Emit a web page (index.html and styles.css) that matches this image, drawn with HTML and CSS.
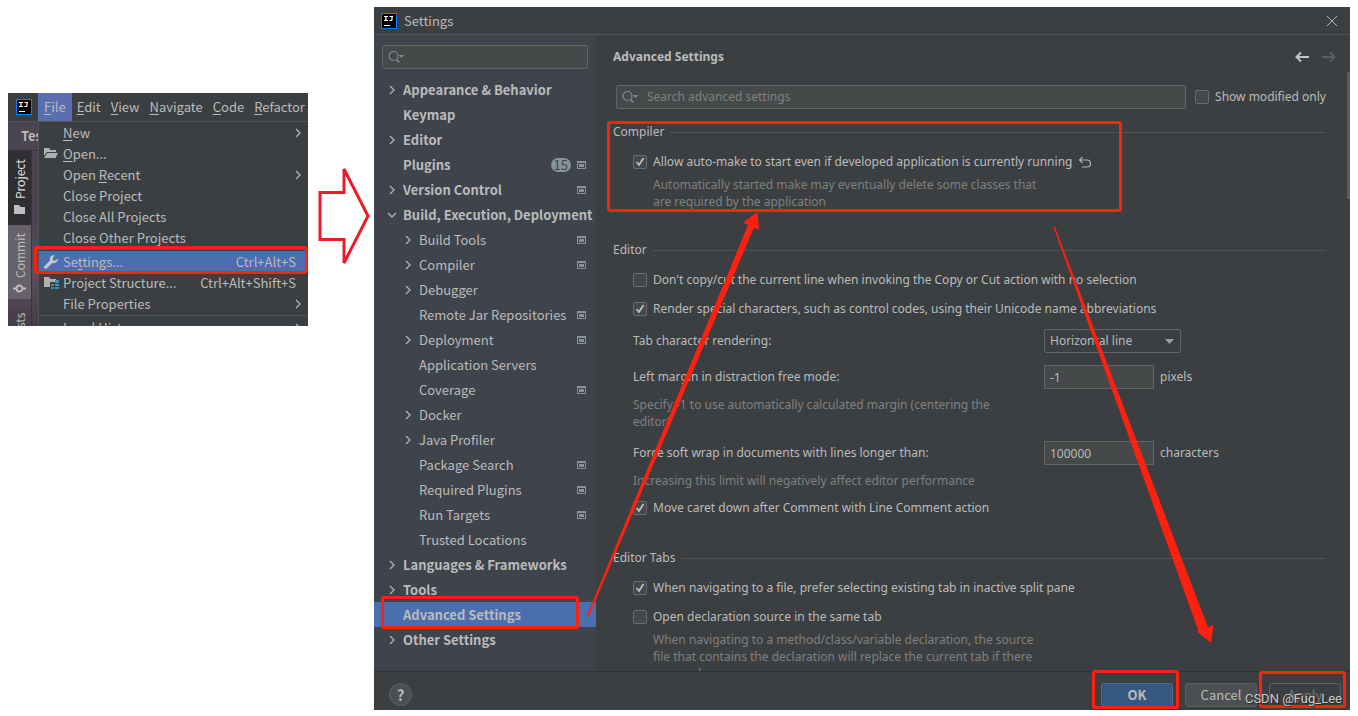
FILE: index.html
```html
<!DOCTYPE html>
<html lang="en">
<head>
<meta charset="utf-8">
<title>Settings</title>
<link rel="stylesheet" href="styles.css">
</head>
<body>
<svg class="defs" width="0" height="0" aria-hidden="true">
  <symbol id="logo" viewBox="0 0 16 16"><rect x=".5" y=".5" width="15" height="15" fill="#000" stroke="#087cfa"/><path d="M3 3.500h4M5 3.500v4M3 7.500h4M8.500 3.500h3.500M11 3.500v3q0 1-1 1H8.500" fill="none" stroke="#fff" stroke-width="1.200"/><path d="M3 12.500h6" stroke="#fff"/></symbol>
  <symbol id="chev" viewBox="0 0 8 10"><path d="M2 1l4 4-4 4" fill="none" stroke="#adb0b3" stroke-width="1.400"/></symbol>
  <symbol id="down" viewBox="0 0 10 8"><path d="M1 2l4 4 4-4" fill="none" stroke="#adb0b3" stroke-width="1.400"/></symbol>
  <symbol id="proj" viewBox="0 0 9 8"><path fill="#87939a" fill-rule="evenodd" d="M0 0h9v8H0zM1 2h7v5H1z"/><path fill="#87939a" d="M2 3h5v3H2z"/></symbol>
  <symbol id="search" viewBox="0 0 16 14"><circle cx="5.500" cy="6" r="4.500" fill="none" stroke="#7f8b91" stroke-width="1.200"/><path d="M8.500 9.500l3 3" stroke="#7f8b91" stroke-width="1.500"/><path d="M11 5h5l-2.500 3z" fill="#7f8b91"/></symbol>
</svg>

<section class="ide" aria-label="File menu">
  <nav class="menubar">
    <svg class="logo"><use href="#logo"/></svg>
    <button class="open"><u>F</u>ile</button><button><u>E</u>dit</button><button><u>V</u>iew</button><button><u>N</u>avigate</button><button><u>C</u>ode</button><button><u>R</u>efactor</button>
  </nav>
  <div class="ide-body">
    <aside class="strip">
      <div class="crumb">Test</div>
      <div class="tabs">
        <button class="tab active">Project<svg width="11" height="9" viewBox="0 0 11 9"><path fill="#bdbfc1" d="M0 0h5l1.500 2H11v7H0z"/></svg></button>
        <button class="tab">Commit<svg width="13" height="9" viewBox="0 0 13 9"><circle cx="6.500" cy="4.500" r="3" fill="none" stroke="#bdbfc1" stroke-width="1.800"/><path d="M0 4.500h3.500M9.500 4.500H13" stroke="#bdbfc1" stroke-width="1.800"/></svg></button>
        <button class="tab last">Tests</button>
      </div>
    </aside>
    <div class="menu">
      <button class="item"><span class="ic"></span><span><u>N</u>ew</span><svg class="chev"><use href="#chev"/></svg></button>
      <button class="item"><span class="ic"><svg width="14" height="11" viewBox="0 0 14 11"><path fill="#afb1b3" d="M0 0h5l1.500 2H12v2H3L0 8zM3.500 5H14l-2.500 5H0z"/></svg></span><span><u>O</u>pen...</span></button>
      <button class="item"><span class="ic"></span><span>Open <u>R</u>ecent</span><svg class="chev"><use href="#chev"/></svg></button>
      <button class="item"><span class="ic"></span><span>Close Pro<u>j</u>ect</span></button>
      <button class="item"><span class="ic"></span><span>Close All Projects</span></button>
      <button class="item"><span class="ic"></span><span>Close Other Projects</span></button>
      <hr>
      <button class="item selected"><span class="ic"><svg width="14" height="14" viewBox="0 0 14 14"><path fill="#c3c7cc" d="M13.600 3.600l-2.300 2.200-2.200-.6-.5-2L10.700.6C9 0 7.200.6 6.300 2c-.7 1.100-.7 2.300-.3 3.400L.5 10.900c-.7.7-.7 1.700 0 2.400s1.700.7 2.400 0L8.400 7.900c1.100.4 2.400.3 3.500-.4 1.400-.9 2.200-2.500 1.700-3.900z"/></svg></span><span>Se<u>t</u>tings...</span><kbd>Ctrl+Alt+S</kbd><i class="mark"></i></button>
      <button class="item"><span class="ic"><svg width="15" height="12" viewBox="0 0 15 12"><path fill="#afb1b3" d="M0 0h5l1.500 2H12v3H6v5H0z"/><path fill="#3592c4" d="M11 3h4v3h-4zM7 7h3v2H7zM11 7h4v2h-4zM7 10h3v2H7zM11 10h4v2h-4z"/></svg></span><span>Project Structure...</span><kbd>Ctrl+Alt+Shift+S</kbd></button>
      <button class="item"><span class="ic"></span><span>File Properties</span><svg class="chev"><use href="#chev"/></svg></button>
      <hr>
      <button class="item"><span class="ic"></span><span>Local <u>H</u>istory</span><svg class="chev"><use href="#chev"/></svg></button>
    </div>
  </div>
</section>

<svg class="next" width="52" height="100" viewBox="0 0 52 100" aria-hidden="true"><path d="M2 26.500h24V3l24 47-24 47V73.500H2z" fill="none" stroke="#ed1c24" stroke-width="3"/></svg>

<main class="dialog">
  <header class="title"><svg class="logo"><use href="#logo"/></svg><span>Settings</span><button class="close" aria-label="Close"><svg width="12" height="12" viewBox="0 0 12 12"><path d="M1 1l10 10M11 1L1 11" stroke="#afb1b3"/></svg></button></header>
  <div class="content">
    <aside class="side">
      <label class="field"><svg class="mag"><use href="#search"/></svg><input type="text" aria-label="Search settings"></label>
      <ul class="tree">
        <li><svg class="chev"><use href="#chev"/></svg><b>Appearance &amp; Behavior</b></li>
        <li><i class="chev"></i><b>Keymap</b></li>
        <li><svg class="chev"><use href="#chev"/></svg><b>Editor</b></li>
        <li><i class="chev"></i><b>Plugins</b><span class="badge">15</span><svg class="proj"><use href="#proj"/></svg></li>
        <li><svg class="chev"><use href="#chev"/></svg><b>Version Control</b><svg class="proj"><use href="#proj"/></svg></li>
        <li><svg class="chev"><use href="#down"/></svg><b>Build, Execution, Deployment</b></li>
        <li class="sub"><svg class="chev"><use href="#chev"/></svg><span>Build Tools</span><svg class="proj"><use href="#proj"/></svg></li>
        <li class="sub"><svg class="chev"><use href="#chev"/></svg><span>Compiler</span><svg class="proj"><use href="#proj"/></svg></li>
        <li class="sub"><svg class="chev"><use href="#chev"/></svg><span>Debugger</span></li>
        <li class="sub"><i class="chev"></i><span>Remote Jar Repositories</span><svg class="proj"><use href="#proj"/></svg></li>
        <li class="sub"><svg class="chev"><use href="#chev"/></svg><span>Deployment</span><svg class="proj"><use href="#proj"/></svg></li>
        <li class="sub"><i class="chev"></i><span>Application Servers</span></li>
        <li class="sub"><i class="chev"></i><span>Coverage</span><svg class="proj"><use href="#proj"/></svg></li>
        <li class="sub"><svg class="chev"><use href="#chev"/></svg><span>Docker</span></li>
        <li class="sub"><svg class="chev"><use href="#chev"/></svg><span>Java Profiler</span></li>
        <li class="sub"><i class="chev"></i><span>Package Search</span><svg class="proj"><use href="#proj"/></svg></li>
        <li class="sub"><i class="chev"></i><span>Required Plugins</span><svg class="proj"><use href="#proj"/></svg></li>
        <li class="sub"><i class="chev"></i><span>Run Targets</span><svg class="proj"><use href="#proj"/></svg></li>
        <li class="sub"><i class="chev"></i><span>Trusted Locations</span></li>
        <li><svg class="chev"><use href="#chev"/></svg><b>Languages &amp; Frameworks</b></li>
        <li><svg class="chev"><use href="#chev"/></svg><b>Tools</b></li>
        <li class="selected"><i class="chev"></i><b>Advanced Settings</b><i class="mark"></i></li>
        <li><svg class="chev"><use href="#chev"/></svg><b>Other Settings</b></li>
      </ul>
    </aside>
    <div class="panel">
      <div class="head"><h1>Advanced Settings</h1>
        <button aria-label="Back"><svg width="14" height="12" viewBox="0 0 14 12"><path d="M1.500 6H14M6 1.500L1.500 6 6 10.500" fill="none" stroke="#c4c6c8" stroke-width="2"/></svg></button>
        <button aria-label="Forward" disabled><svg width="14" height="12" viewBox="0 0 14 12"><path d="M0 6h12.500M8 1.500L12.500 6 8 10.500" fill="none" stroke="#5c5f61" stroke-width="2"/></svg></button>
      </div>
      <div class="filter"><label class="field"><svg class="mag"><use href="#search"/></svg><input type="text" placeholder="Search advanced settings" aria-label="Search advanced settings"></label><label class="check"><input type="checkbox">Show modified only</label></div>

      <section class="group">
        <h2>Compiler</h2>
        <div class="line"><label class="check"><input type="checkbox" checked>Allow auto-make to start even if developed application is currently running</label><button class="undo" aria-label="Reset"><svg width="14" height="12" viewBox="0 0 14 12"><path d="M4.500 1L1.500 4l3 3M1.500 4H9q3.500 0 3.500 3.500T9 11H4" fill="none" stroke="#afb1b3" stroke-width="1.200"/></svg></button></div>
        <p class="note indent">Automatically started make may eventually delete some classes that<br>are required by the application</p>
        <i class="mark"></i>
      </section>

      <section class="group">
        <h2>Editor</h2>
        <label class="check"><input type="checkbox">Don't copy/cut the current line when invoking the Copy or Cut action with no selection</label>
        <label class="check"><input type="checkbox" checked>Render special characters, such as control codes, using their Unicode name abbreviations</label>
        <div class="row"><label for="tab">Tab character rendering:</label><select id="tab"><option>Horizontal line</option></select></div>
        <div class="row"><label for="margin">Left margin in distraction free mode:</label><input id="margin" type="text" value="-1"><span>pixels</span></div>
        <p class="note">Specify -1 to use automatically calculated margin (centering the<br>editor)</p>
        <div class="row"><label for="wrap">Force soft wrap in documents with lines longer than:</label><input id="wrap" type="text" value="100000"><span>characters</span></div>
        <p class="note">Increasing this limit will negatively affect editor performance</p>
        <label class="check"><input type="checkbox" checked>Move caret down after Comment with Line Comment action</label>
      </section>

      <section class="group">
        <h2>Editor Tabs</h2>
        <label class="check"><input type="checkbox" checked>When navigating to a file, prefer selecting existing tab in inactive split pane</label>
        <label class="check"><input type="checkbox">Open declaration source in the same tab</label>
        <p class="note indent">When navigating to a method/class/variable declaration, the source<br>file that contains the declaration will replace the current tab if there<br>are no changes</p>
      </section>
      <i class="thumb"></i>
    </div>
  </div>
  <footer class="foot">
    <button class="help" aria-label="Help">?</button>
    <button class="btn ok">OK<i class="mark"></i></button>
    <button class="btn">Cancel</button>
    <button class="btn off">Apply<i class="mark"></i></button>
    <span class="credit">CSDN @Fug_Lee</span>
  </footer>
  <svg class="arrows" viewBox="0 0 976 703" aria-hidden="true"><path fill="#ff2010" d="M213 608.500L374 218l-5-2.500L383.500 205l1.500 18-5-2.500L215 609zM679.500 220L824.500 624 823 624l-.5 0L837 636l2.500-18-5.500 2.500L681 220z"/></svg>
</main>
</body>
</html>
```
FILE: styles.css
```css
* { box-sizing: border-box; }
body {
  margin: 0;
  height: 100vh;
  padding: 7px 8px 6px;
  display: flex;
  align-items: flex-start;
  background: #fff;
  color: #bbbbbb;
  font: 13px/20px "Noto Sans CJK SC", "Noto Sans", sans-serif;
  overflow: hidden;
}
button, input, select { font: inherit; color: inherit; margin: 0; padding: 0; border: 0; background: none; }
button { white-space: nowrap; }
svg { display: block; flex: none; }
u { text-underline-offset: 2px; text-decoration-thickness: 1px; }
.defs { position: absolute; }
.logo { width: 16px; height: 16px; }
.chev { width: 10px; height: 10px; flex: none; }
.mark { position: absolute; border: 3px solid #ff2010; border-radius: 3px; pointer-events: none; }

/* IDE window with the File menu open */
.ide { width: 300px; flex: none; height: 233px; margin-top: 86px; background: #3c3f41; overflow: hidden; }
.menubar { display: flex; height: 28px; align-items: stretch; }
.menubar .logo { margin: 6px 6px 0 8px; }
.menubar button { padding: 0 5px; }
.menubar .open { padding: 0 6px; background: #5a6eb0; }
.ide-body { display: flex; border-top: 1px solid #515456; }
.strip { width: 30px; height: 204px; flex: none; overflow: hidden; background: linear-gradient(#4a4550, #4a4351 100px, #5e4f5e 150px, #443c47); }
.crumb { height: 29px; padding: 4px 0 0 13px; font-weight: bold; border-bottom: 1px solid #39353c; }
.tabs { width: 24px; border-right: 1px solid #38343c; font-size: 12px; }
.tab { writing-mode: vertical-rl; transform: rotate(180deg); display: flex; flex-direction: row-reverse; align-items: center; gap: 6px; width: 23px; height: 74px; padding-bottom: 8px; line-height: 20px; background: #66616a; }
.tab.active { background: #302e33; color: #e0e0e0; }
.tab.active svg { transform: rotate(180deg); }
.tab.last { padding-bottom: 14px; background: none; }
.menu { flex: 1; border-left: 1px solid #515456; }
.item { position: relative; display: flex; align-items: center; width: 100%; height: 21px; text-align: left; padding-right: 12px; }
.item .ic { width: 24px; padding-left: 5px; flex: none; }
.item .chev, .item kbd { margin-left: auto; font: inherit; }
.item .chev { margin-right: -7px; }
.item.selected { background: #4b6eaf; }
.item .mark { inset: -5px 0 -2px -5px; z-index: 1; }
.menu hr { border: 0; border-top: 1px solid #515456; margin: 1px 0; }
.next { margin: 159px 4px 0 10px; }

/* Settings dialog */
.dialog { position: relative; flex: 1; min-width: 0; height: 100%; display: flex; flex-direction: column; background: #3c3f41; }
.title { display: flex; align-items: center; height: 28px; padding: 0 12px 0 7px; gap: 7px; border-bottom: 1px solid #515456; }
.close { margin-left: auto; }
.content { flex: 1; min-height: 0; display: flex; }
.side { width: 222px; flex: none; padding-top: 10px; background: #3f434c; overflow: hidden; }
.field { display: flex; align-items: center; height: 24px; padding-left: 5px; border: 1px solid #646464; border-radius: 2px; background: #45494a; }
.field input { flex: 1; min-width: 0; outline: 0; margin-left: 9px; }
.field input::placeholder { color: #808080; opacity: 1; }
.mag { width: 16px; height: 14px; }
.side .field { margin: 0 8px 8px; }
.tree { list-style: none; margin: 0; padding: 0; }
.tree li { position: relative; display: flex; align-items: center; height: 25px; padding: 0 10px 0 13px; gap: 6px; white-space: nowrap; }
.tree li.sub { padding-left: 29px; }
.tree li.selected { background: #4b6eaf; }
.tree .mark { inset: -6px 17px -2px 7px; z-index: 1; }
.proj { width: 9px; height: 8px; margin-left: auto; }
.badge { margin-left: auto; height: 14px; line-height: 14px; padding: 0 3px; border-radius: 7px; background: #87939a; color: #3f434c; }
.badge + .proj { margin-left: 0; }

.panel { position: relative; flex: 1; min-width: 0; padding: 10px 24px 0 17px; overflow: hidden; font-family: "Noto Sans", sans-serif; font-size: 12px; }
.head { display: flex; align-items: center; height: 24px; gap: 13px; margin: 0 -10px 16px 0; }
h1 { flex: 1; margin: 0; font-size: 12px; }
.filter { display: flex; align-items: center; gap: 9px; padding-left: 3px; margin-bottom: 13px; }
.filter .field { flex: 1; }
.check { display: flex; align-items: center; height: 20px; gap: 6px; white-space: nowrap; }
.check input { appearance: none; width: 14px; height: 14px; flex: none; border: 1px solid #6b6b6b; border-radius: 2px; background: #43494a; }
.check input:checked { background: #43494a url("data:image/svg+xml,%3Csvg xmlns='http://www.w3.org/2000/svg' viewBox='0 0 12 12'%3E%3Cpath d='M2.500 6l2.500 3 4.500-7' fill='none' stroke='%23bbb' stroke-width='1.900'/%3E%3C/svg%3E"); }
.group { position: relative; margin-bottom: 30px; }
h2 { display: flex; align-items: center; gap: 6px; margin: 0 0 10px; font-size: 12px; font-weight: normal; }
h2::after { content: ""; flex: 1; border-top: 1px solid #515456; }
.group > :not(h2) { margin-left: 20px; }
.check + .check { margin-top: 9px; }
.note + .check { margin-top: 9px; }
.line { display: flex; align-items: center; gap: 6px; }
.row { display: flex; align-items: center; height: 24px; margin-top: 11px; gap: 6px; }
.row + .row { margin-top: 12px; }
.check + .row { margin-top: 10px; }
.row label { width: 405px; }
.row input, .row select { width: 110px; height: 24px; padding: 0 5px; border: 1px solid #646464; background: #45494a; }
.row select { width: 137px; border-radius: 2px; appearance: none; background: #3c3f41 url("data:image/svg+xml,%3Csvg xmlns='http://www.w3.org/2000/svg' viewBox='0 0 9 5'%3E%3Cpath d='M0 0h9L4.500 5z' fill='%239da0a2'/%3E%3C/svg%3E") no-repeat right 6px center / 9px 5px; }
.note { margin: 7px 0 0; line-height: 17px; color: #808080; white-space: nowrap; }
.group > .note.indent { margin: 4px 0 0 40px; }
.group > .mark { inset: -1px auto -2px -6px; margin-left: 0; width: 515px; }
.thumb { position: absolute; top: 37px; right: 0; width: 3px; height: 127px; background: #5b5e60; }

.foot { position: relative; display: flex; align-items: flex-start; gap: 12px; height: 39px; padding: 11px 9px 0 15px; border-top: 1px solid #2f3234; }
.help { width: 23px; height: 23px; margin-right: auto; border: 1px solid #5e6060; border-radius: 50%; background: #4c5052; font-size: 15px; font-weight: bold; line-height: 20px; }
.btn { position: relative; width: 72px; height: 24px; line-height: 22px; border: 1px solid #5e6060; border-radius: 3px; background: #4c5052; }
.btn.ok { background: #365880; border-color: #4c708c; font-weight: bold; }
.btn.off { background: none; color: #777; }
.btn .mark { inset: -14px -7px -3px -10px; }
.btn.off .mark { inset: -13px -6px -2px -11px; }
.credit { position: absolute; right: 8px; top: 17px; color: #ccc; font-family: Roboto, sans-serif; text-shadow: 1px 1px 1px #222; z-index: 1; }
.arrows { position: absolute; left: 0; top: 0; width: 976px; height: 703px; pointer-events: none; }
```
